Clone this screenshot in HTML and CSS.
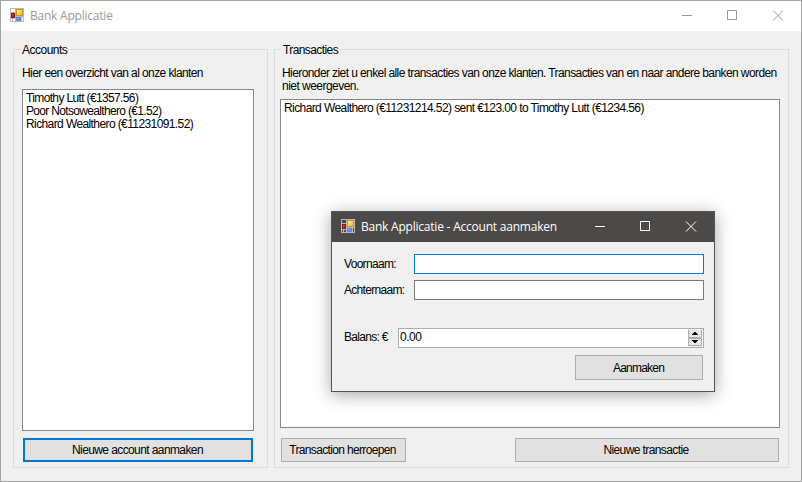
FILE: index.html
```
<!DOCTYPE html>
<html lang="nl">
<head>
<meta charset="utf-8">
<title>Bank Applicatie</title>
<link rel="stylesheet" href="styles.css">
</head>
<body>
<svg width="0" height="0" class="defs">
  <defs>
    <linearGradient id="gold" x1="0" y1="0" x2="1" y2="1"><stop offset="0" stop-color="#fff0a0"/><stop offset="1" stop-color="#f5b800"/></linearGradient>
    <linearGradient id="red" x1="0" y1="0" x2="1" y2="1"><stop offset="0" stop-color="#e05a4a"/><stop offset="1" stop-color="#a80c08"/></linearGradient>
    <linearGradient id="blue" x1="0" y1="0" x2="1" y2="1"><stop offset="0" stop-color="#8dbcff"/><stop offset="1" stop-color="#2f6bdc"/></linearGradient>
    <symbol id="app" viewBox="0 0 14 14">
      <path class="frame" fill-rule="evenodd" d="M0 0H14V14H0ZM1 1V4H5V1ZM1 11V13H2V11ZM3 11V13H5V11ZM12 9V13H13V9Z"/>
      <path fill="#c4952a" d="M6 1H13V8H6Z"/><path fill="url(#gold)" d="M7 2H12V7H7Z"/>
      <path fill="#8e1410" d="M1 5H5V10H1Z"/><path fill="url(#red)" d="M2 6H4V9H2Z"/>
      <path fill="#5a8ad8" d="M6 9H11V13H6Z"/><path fill="url(#blue)" d="M7 10H10V12H7Z"/>
    </symbol>
  </defs>
</svg>
<main class="window">
  <header class="titlebar">
    <svg class="app-icon" width="14" height="14"><use href="#app"/></svg>
    <span class="title">Bank Applicatie</span>
    <svg class="controls" width="102" height="11" viewBox="0 0 102 11" fill="none" stroke="currentColor"><path d="M0 5.5H10M45.5 .5H54.5V9.5H45.5Z"/><path d="M91 .5L101 10.5M101 .5L91 10.5"/></svg>
  </header>
  <div class="client">
    <section class="group accounts">
      <h2 class="legend"><span class="t-acc">Accounts</span></h2>
      <p class="intro">Hier een overzicht van al onze klanten</p>
      <ul class="list">
        <li class="t-tim">Timothy Lutt (€1357.56)</li>
        <li class="t-poor">Poor Notsowealthero (€1.52)</li>
        <li class="t-rich">Richard Wealthero (€11231091.52)</li>
      </ul>
      <button class="btn primary">Nieuwe account aanmaken</button>
    </section>
    <section class="group transactions">
      <h2 class="legend">Transacties</h2>
      <p class="intro">Hieronder ziet u enkel alle transacties van onze klanten. Transacties van en naar andere banken worden<br><span class="t-niet">niet weergeven.</span></p>
      <ul class="list">
        <li>Richard Wealthero (€11231214.52) sent €123.00 to Timothy Lutt (€1234.56)</li>
      </ul>
      <div class="actions">
        <button class="btn revoke">Transaction herroepen</button>
        <button class="btn new">Nieuwe transactie</button>
      </div>
    </section>
  </div>
</main>
<div class="dialog">
  <header class="titlebar dark">
    <svg class="app-icon" width="14" height="14"><use href="#app"/></svg>
    <span class="title">Bank Applicatie - Account aanmaken</span>
    <svg class="controls" width="102" height="11" viewBox="0 0 102 11" fill="none" stroke="currentColor"><path d="M0 5.5H10M45.5 .5H54.5V9.5H45.5Z"/><path d="M91 .5L101 10.5M101 .5L91 10.5"/></svg>
  </header>
  <div class="form">
    <div class="row"><span class="label">Voornaam:</span><span class="field focus"></span></div>
    <div class="row"><span class="label">Achternaam:</span><span class="field"></span></div>
    <div class="row balance"><span class="label">Balans: €</span>
      <div class="field number"><span class="amount">0.00</span>
        <svg class="spin" width="15" height="18" viewBox="0 0 15 18"><path fill="#f0f0f0" d="M0 0H15V18H0Z"/><path fill="#e8e8e8" stroke="#acacac" d="M.5 .5H13.5V8.5H.5ZM.5 9.5H13.5V16.5H.5Z"/><path fill="#f0f0f0" d="M0 0H14V1H0Z"/><path fill="#000" d="M6 3H8V4H9V5H10V6H4V5H5V4H6ZM4 11H10V12H9V13H8V14H6V13H5V12H4Z"/></svg>
      </div>
    </div>
    <button class="btn create">Aanmaken</button>
  </div>
</div>
</body>
</html>
```
FILE: styles.css
```
* { box-sizing: border-box; margin: 0; padding: 0; }
body { width: 802px; height: 482px; overflow: hidden; background: #f0f0f0; color: #000; font: 12px/13px "Liberation Sans", sans-serif; letter-spacing: -.592px; white-space: nowrap; }
.defs { position: absolute; }
.frame { fill: #b8b8b8; }
.window { height: 482px; border: 1px solid #a2a2a2; display: flex; flex-direction: column; }
.titlebar { height: 30px; flex: none; display: flex; align-items: center; padding: 0 17px 0 9px; background: #fff; color: #999; }
.app-icon { margin: -2px 6px 0 0; }
.title { font: 12px/16px "Open Sans", sans-serif; letter-spacing: -.22px; }
.controls { margin: -1px 0 0 auto; }
.client { flex: 1; display: flex; gap: 6px; padding: 18px 12px 13px; }
.group { border: 1px solid #dcdcdc; display: flex; flex-direction: column; }
.accounts { width: 255px; padding: 0 13px 4px 8px; }
.transactions { width: 515px; padding: 0 8px 4px 5px; }
.legend { font: inherit; height: 13px; margin-top: -6px; align-self: flex-start; background: #f0f0f0; padding: 0 1px; }
.accounts .legend { width: 48px; margin-left: -1px; }
.transactions .legend { width: 58px; margin-left: 1px; padding-left: 2px; }
.intro { margin-top: 10px; }
.transactions .intro { margin-left: 2px; }
.list { list-style: none; background: #fff; border: 1px solid #828790; padding: 2px 3px; }
.accounts .list { height: 342px; margin-top: 9px; }
.transactions .list { height: 329px; margin-top: 6px; width: 500px; }
.t-acc { letter-spacing: -.5px; }
.t-tim { letter-spacing: -.64px; }
.t-poor { letter-spacing: -.67px; }
.t-rich { letter-spacing: -.6px; }
.t-niet { letter-spacing: -.53px; }
.btn { font: inherit; letter-spacing: inherit; color: inherit; background: #e1e1e1; border: 1px solid #adadad; height: 24px; display: flex; align-items: center; justify-content: center; white-space: nowrap; }
.primary { border: 2px solid #0078d7; width: 230px; margin: 7px 0 0 1px; padding-right: 1px; letter-spacing: -.6px; }
.actions { display: flex; justify-content: space-between; margin: 10px 1px 0; }
.revoke { width: 125px; padding-right: 2px; letter-spacing: -.65px; }
.new { width: 264px; padding-right: 2px; letter-spacing: -.6px; }
.dialog { position: absolute; left: 331px; top: 211px; width: 384px; height: 181px; background: #f0f0f0; border: 1px solid #555; box-shadow: 0 3px 16px rgba(0, 0, 0, .35); }
.dark { background: #4c4a48; color: #fff; }
.form { padding: 12px 10px 0 12px; display: flex; flex-direction: column; }
.row { display: flex; align-items: center; justify-content: space-between; height: 20px; margin-bottom: 6px; }
.label { letter-spacing: -.69px; }
.field { width: 290px; height: 20px; background: #fff; border: 1px solid #7a7a7a; }
.focus { border-color: #0078d7; }
.balance { margin-top: 22px; }
.balance .label, .amount { padding-bottom: 1px; }
.amount { letter-spacing: -.5px; }
.number { width: 306px; border-color: #abadb3; display: flex; align-items: center; justify-content: space-between; padding-left: 1px; }
.create { width: 128px; height: 25px; align-self: flex-end; margin: 1px 1px 0 0; padding: 1px 1px 0 0; letter-spacing: -.78px; }
```
